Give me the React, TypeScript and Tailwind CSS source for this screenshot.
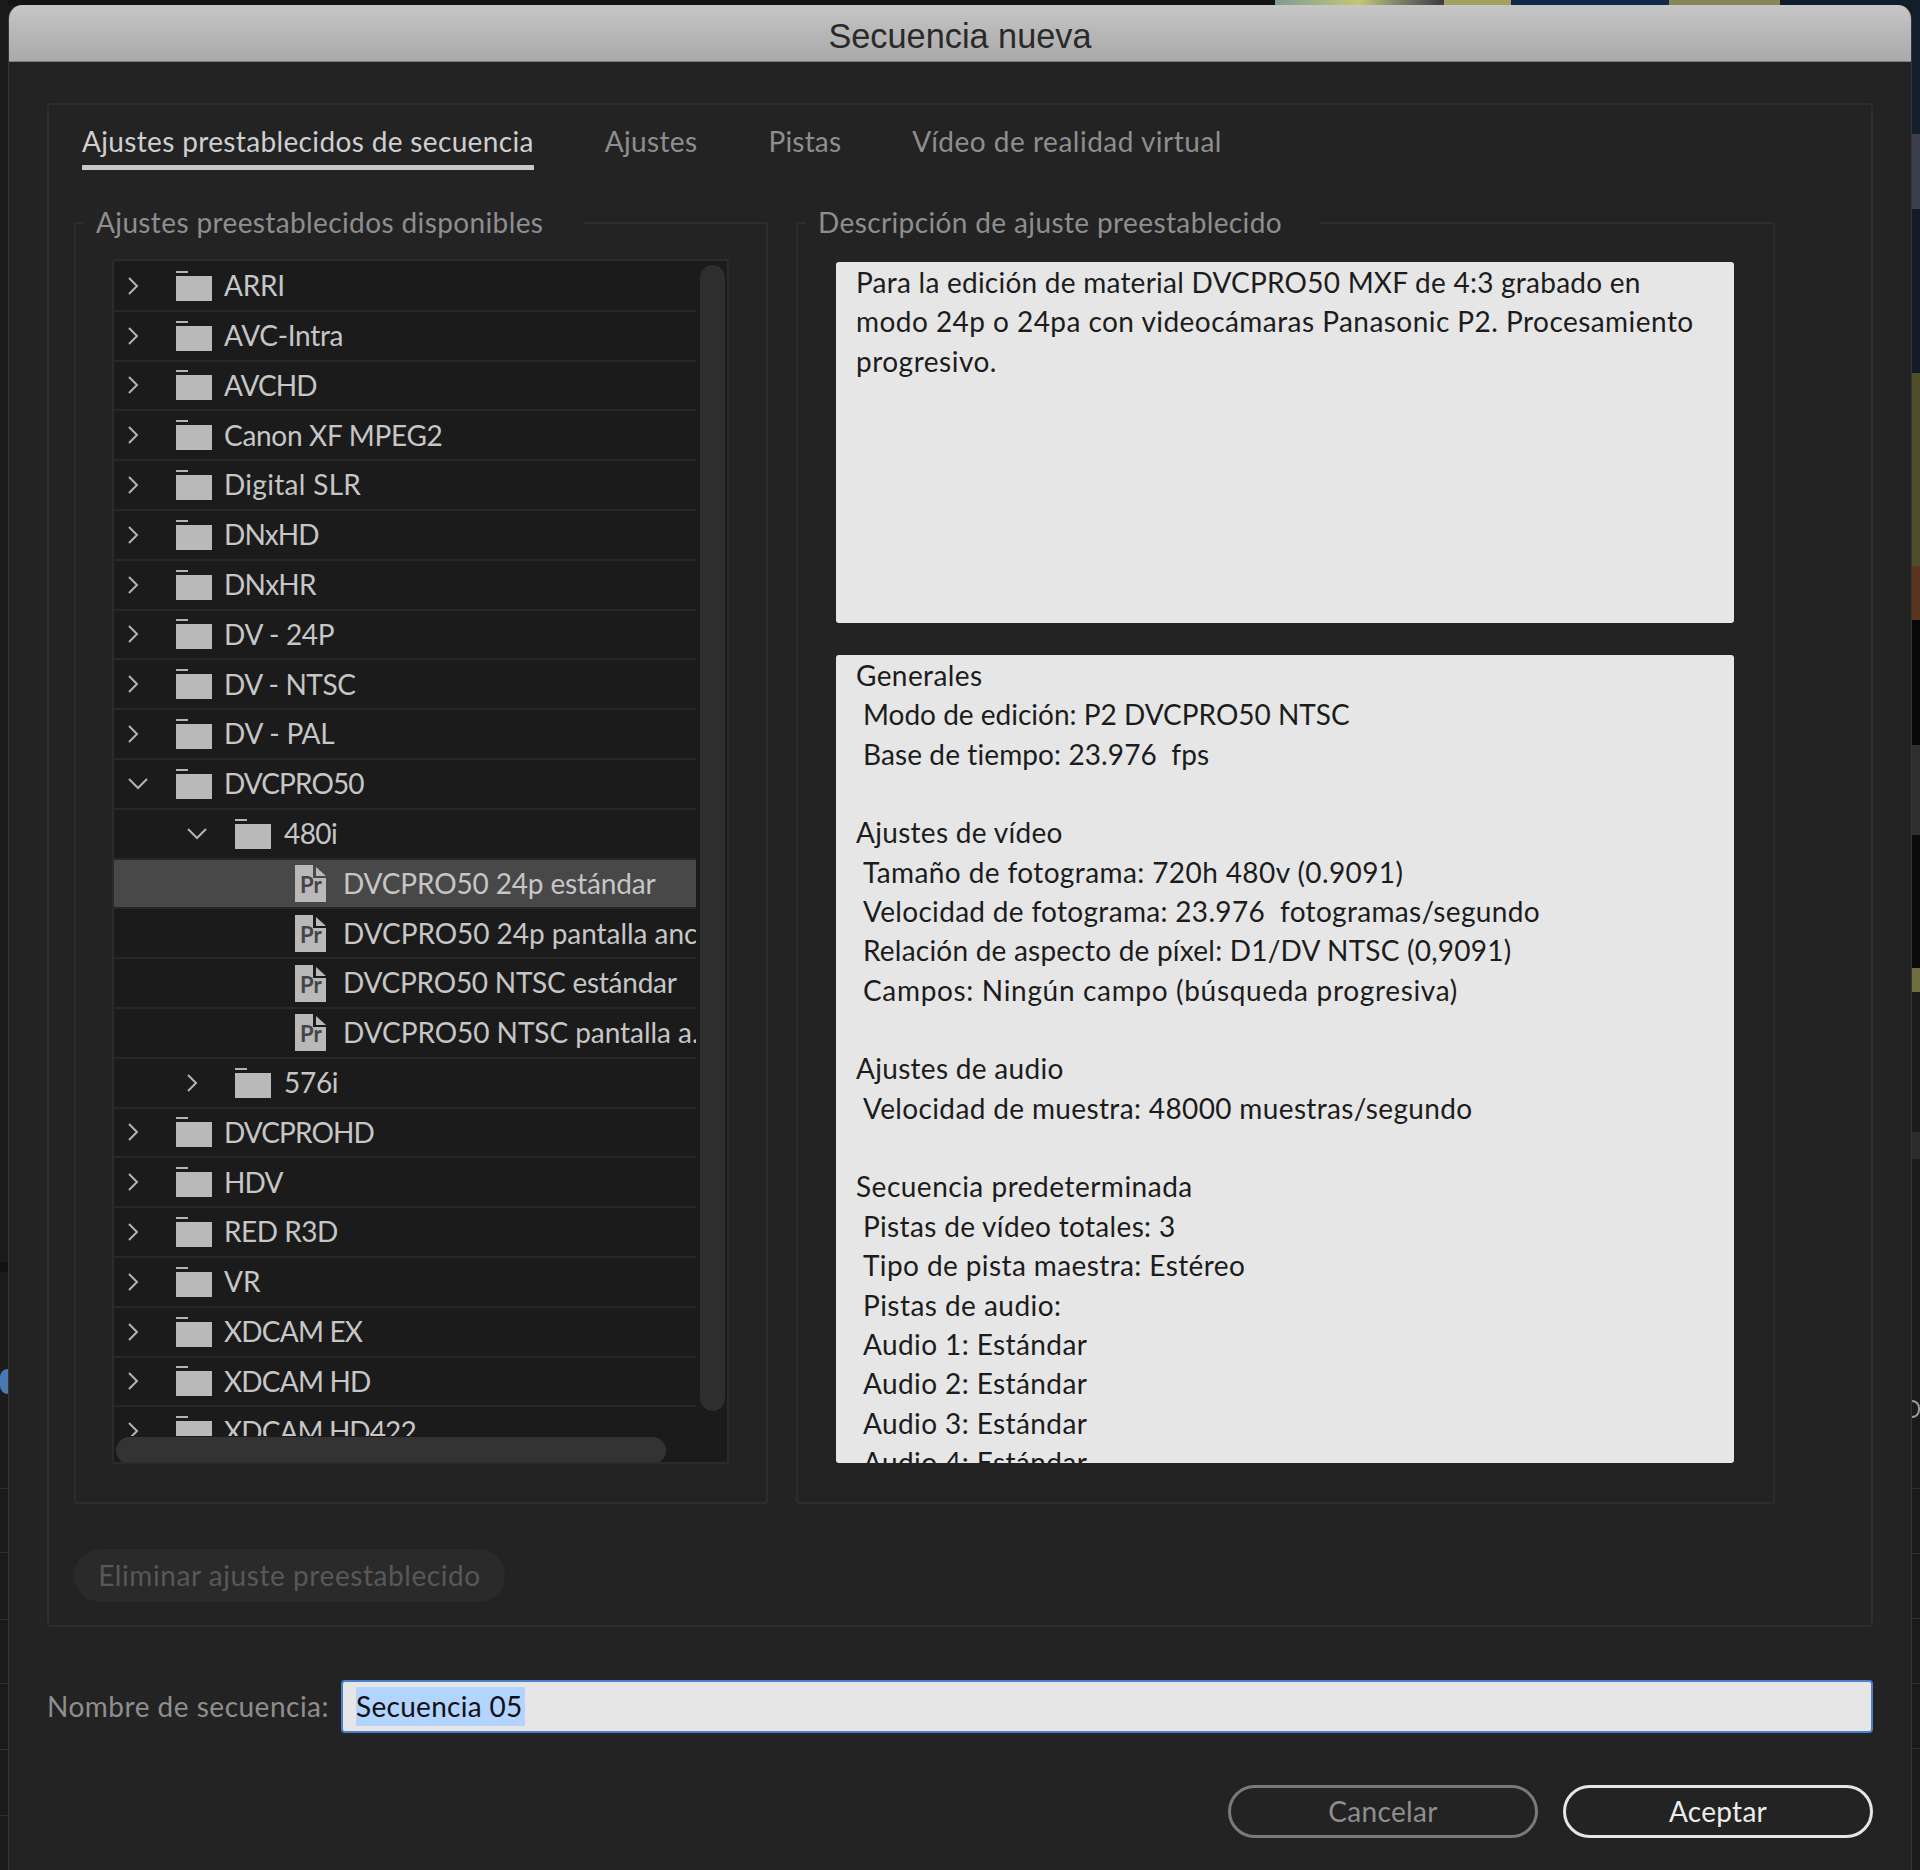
import type { ReactNode } from 'react';

type TreeRow = {
  label: string;
  depth: number;
  kind: 'closed' | 'open' | 'preset';
  fit?: string;
  selected?: boolean;
};

const treeRows: TreeRow[] = [
  { label: 'ARRI', depth: 0, kind: 'closed', fit: 'tracking-[-0.3px]' },
  { label: 'AVC-Intra', depth: 0, kind: 'closed', fit: 'tracking-[-0.3px]' },
  { label: 'AVCHD', depth: 0, kind: 'closed', fit: 'tracking-[-0.9px]' },
  { label: 'Canon XF MPEG2', depth: 0, kind: 'closed', fit: 'tracking-[-0.3px]' },
  { label: 'Digital SLR', depth: 0, kind: 'closed', fit: 'tracking-[0.3px]' },
  { label: 'DNxHD', depth: 0, kind: 'closed', fit: 'tracking-[-0.9px]' },
  { label: 'DNxHR', depth: 0, kind: 'closed', fit: 'tracking-[-0.7px]' },
  { label: 'DV - 24P', depth: 0, kind: 'closed', fit: 'tracking-[-0.3px]' },
  { label: 'DV - NTSC', depth: 0, kind: 'closed', fit: 'tracking-[-0.4px]' },
  { label: 'DV - PAL', depth: 0, kind: 'closed', fit: 'tracking-[-0.2px]' },
  { label: 'DVCPRO50', depth: 0, kind: 'open', fit: 'tracking-[-0.9px]' },
  { label: '480i', depth: 1, kind: 'open', fit: 'tracking-[-0.6px]' },
  { label: 'DVCPRO50 24p estándar', depth: 2, kind: 'preset', fit: 'tracking-[-0.15px]', selected: true },
  { label: 'DVCPRO50 24p pantalla ancha', depth: 2, kind: 'preset', fit: 'tracking-[-0.05px]' },
  { label: 'DVCPRO50 NTSC estándar', depth: 2, kind: 'preset', fit: 'tracking-[-0.25px]' },
  { label: 'DVCPRO50 NTSC pantalla a...', depth: 2, kind: 'preset', fit: 'tracking-[-0.05px]' },
  { label: '576i', depth: 1, kind: 'closed', fit: 'tracking-[-0.3px]' },
  { label: 'DVCPROHD', depth: 0, kind: 'closed', fit: 'tracking-[-0.9px]' },
  { label: 'HDV', depth: 0, kind: 'closed', fit: 'tracking-[-0.8px]' },
  { label: 'RED R3D', depth: 0, kind: 'closed', fit: 'tracking-[-0.5px]' },
  { label: 'VR', depth: 0, kind: 'closed' },
  { label: 'XDCAM EX', depth: 0, kind: 'closed', fit: 'tracking-[-0.8px]' },
  { label: 'XDCAM HD', depth: 0, kind: 'closed', fit: 'tracking-[-0.8px]' },
  { label: 'XDCAM HD422', depth: 0, kind: 'closed', fit: 'tracking-[-0.9px]' },
];

const summaryLines: { text: string; indented?: boolean; fit?: string }[] = [
  { text: 'Generales', fit: 'tracking-[0.4px]' },
  { text: 'Modo de edición: P2 DVCPRO50 NTSC', indented: true },
  { text: 'Base de tiempo: 23.976  fps', indented: true, fit: 'tracking-[0.1px]' },
  { text: '' },
  { text: 'Ajustes de vídeo', fit: 'tracking-[0.3px]' },
  { text: 'Tamaño de fotograma: 720h 480v (0.9091)', indented: true, fit: 'tracking-[0.4px]' },
  { text: 'Velocidad de fotograma: 23.976  fotogramas/segundo', indented: true, fit: 'tracking-[0.32px]' },
  { text: 'Relación de aspecto de píxel: D1/DV NTSC (0,9091)', indented: true, fit: 'tracking-[0.22px]' },
  { text: 'Campos: Ningún campo (búsqueda progresiva)', indented: true, fit: 'tracking-[0.67px]' },
  { text: '' },
  { text: 'Ajustes de audio', fit: 'tracking-[0.3px]' },
  { text: 'Velocidad de muestra: 48000 muestras/segundo', indented: true, fit: 'tracking-[0.36px]' },
  { text: '' },
  { text: 'Secuencia predeterminada', fit: 'tracking-[0.5px]' },
  { text: 'Pistas de vídeo totales: 3', indented: true, fit: 'tracking-[0.33px]' },
  { text: 'Tipo de pista maestra: Estéreo', indented: true, fit: 'tracking-[0.4px]' },
  { text: 'Pistas de audio:', indented: true, fit: 'tracking-[0.45px]' },
  { text: 'Audio 1: Estándar', indented: true, fit: 'tracking-[0.4px]' },
  { text: 'Audio 2: Estándar', indented: true, fit: 'tracking-[0.4px]' },
  { text: 'Audio 3: Estándar', indented: true, fit: 'tracking-[0.4px]' },
  { text: 'Audio 4: Estándar', indented: true, fit: 'tracking-[0.4px]' },
];

function FolderIcon() {
  return (
    <svg width="36" height="30" viewBox="0 0 36 30" className="shrink-0">
      <rect x="0" y="0" width="12" height="2" fill="#b4b4b4" />
      <rect x="0" y="5" width="36" height="25" fill="#b9b9b9" />
    </svg>
  );
}

function PresetIcon() {
  return (
    <svg width="31" height="37" viewBox="0 0 31 37" className="shrink-0">
      <path d="M0 0H18V13H31V37H0Z" fill="#b9b9b9" />
      <path d="M21 2L31 11H21Z" fill="#b9b9b9" />
      <text x="5" y="28" fontSize="22" fontWeight="700" fontFamily="Lato, sans-serif" fill="#454545">
        Pr
      </text>
    </svg>
  );
}

function Chevron({ open }: { open: boolean }) {
  if (open) {
    return (
      <svg width="20" height="12" viewBox="0 0 20 12" fill="none" stroke="#b4b4b4" strokeWidth="2">
        <path d="M1 1L10 10L19 1" />
      </svg>
    );
  }
  return (
    <svg width="11" height="18" viewBox="0 0 11 18" fill="none" stroke="#b4b4b4" strokeWidth="2">
      <path d="M1 1L9 9L1 17" />
    </svg>
  );
}

function Row({ row }: { row: TreeRow }) {
  const indent = row.depth === 0 ? 'pl-[14px]' : row.depth === 1 ? 'pl-[73px]' : 'pl-[133px]';
  const gap = row.kind === 'preset' ? 'ml-[17px]' : row.depth === 1 ? 'ml-[13px]' : 'ml-[12px]';
  return (
    <div
      className={`flex h-[49.8px] shrink-0 items-center whitespace-nowrap border-b-2 border-[#272727] text-[#c6c6c6] ${indent} ${
        row.selected ? 'bg-[#484848]' : ''
      }`}
    >
      <div className="flex w-[48px] shrink-0 items-center">
        {row.kind !== 'preset' && <Chevron open={row.kind === 'open'} />}
      </div>
      {row.kind === 'preset' ? <PresetIcon /> : <FolderIcon />}
      <span className={`${gap} ${row.fit ?? ''}`}>{row.label}</span>
    </div>
  );
}

function Group({
  title,
  width,
  padRight,
  children,
}: {
  title: string;
  width: string;
  padRight: string;
  children: ReactNode;
}) {
  return (
    <fieldset className={`h-[1299px] shrink-0 rounded-[3px] border-2 border-[#2d2d2d] ${width}`}>
      <legend
        className={`ml-[8px] pb-[2px] pl-[12px] text-[28px] leading-[34px] tracking-[0.38px] text-[#8e8e8e] ${padRight}`}
      >
        {title}
      </legend>
      {children}
    </fieldset>
  );
}

export default function App() {
  return (
    <div className="flex h-[1870px] w-[1920px] overflow-hidden bg-[#1a1a1a] font-[Lato,sans-serif] text-[28px] leading-[39.35px]">
      {/* desktop showing behind the dialog, left edge */}
      <div className="flex w-[8px] shrink-0 flex-col bg-[#1b1b1b]">
        <div className="mt-[1262px] h-[10px] bg-[#121212]" />
        <div className="mt-[97px] h-[25px] w-[8px] rounded-l-full bg-[#4a78b0]" />
        <div className="mt-[94px] h-px bg-[#303030]" />
        <div className="mt-[63px] h-px bg-[#303030]" />
        <div className="mt-[66px] h-px bg-[#303030]" />
        <div className="mt-[63px] h-px bg-[#303030]" />
        <div className="mt-[65px] h-px bg-[#303030]" />
        <div className="mt-[65px] h-px bg-[#303030]" />
      </div>

      <div className="flex w-[1904px] shrink-0 flex-col">
        {/* desktop strip above the dialog */}
        <div className="flex h-[5px] shrink-0 bg-[#141414]">
          <div className="w-[1267px]" />
          <div className="w-[169px] bg-gradient-to-r from-[#7f9c93] via-[#c3c774] to-[#3b3b4a]" />
          <div className="w-[67px] bg-[#a3a15c]" />
          <div className="w-[158px] bg-[#12294a]" />
          <div className="w-[111px] bg-[#85875a]" />
          <div className="w-[132px] bg-[#0f1d2c]" />
        </div>

        <div className="flex h-[1865px] flex-col overflow-hidden rounded-t-[14px] border-x border-[#353535] bg-[#232323]">
          <div className="flex h-[57px] shrink-0 items-center justify-center border-b border-[#7c7c7c] bg-gradient-to-b from-[#c6c6c6] to-[#a9a9a9] pt-[7px] font-['Liberation_Sans',sans-serif] text-[34.3px] text-[#2a2a2a]">
            Secuencia nueva
          </div>

          <div className="mx-[38px] mt-[41px] h-[1524px] shrink-0 rounded-[4px] border-2 border-[#2d2d2d]">
            <div className="flex gap-[71px] pl-[33px] pt-[16px] text-[#8e8e8e]">
              <div className="h-[49px] border-b-[5px] border-[#c8c8c8] leading-[40px] tracking-[0.35px] text-[#cfcfcf]">
                Ajustes prestablecidos de secuencia
              </div>
              <div className="leading-[40px] tracking-[0.35px]">Ajustes</div>
              <div className="leading-[40px] tracking-[0.2px]">Pistas</div>
              <div className="leading-[40px] tracking-[0.5px]">Vídeo de realidad virtual</div>
            </div>

            <div className="ml-[25px] mt-[35px] flex gap-[28px]">
              <Group title="Ajustes preestablecidos disponibles" width="w-[694px]" padRight="pr-[40px]">
                <div className="ml-[36px] mt-[18px] h-[1205px] w-[617px] overflow-hidden rounded-[3px] border-2 border-[#2b2b2b] bg-[#1b1b1b]">
                  <div className="flex h-[1175px] overflow-hidden">
                    <div className="flex h-[1175px] w-[582px] shrink-0 flex-col overflow-hidden pt-[1px]">
                      {treeRows.map(row => (
                        <Row key={row.label} row={row} />
                      ))}
                    </div>
                    <div className="ml-[4px] mt-[4px] h-[1146px] w-[25px] rounded-full bg-[#2e2e2e]" />
                  </div>
                  <div className="ml-[2px] mt-[1px] h-[27px] w-[550px] rounded-full bg-[#333333]" />
                </div>
              </Group>

              <Group title="Descripción de ajuste preestablecido" width="w-[979px]" padRight="pr-[38px]">
                <div className="ml-[38px] mt-[21px] flex w-[898px] flex-col gap-[32px] text-[#1c1c1c]">
                  <div className="h-[361px] whitespace-nowrap rounded-[3px] bg-[#e6e6e6] pl-[20px] pt-[1px]">
                    <div className="tracking-[0.24px]">Para la edición de material DVCPRO50 MXF de 4:3 grabado en</div>
                    <div className="tracking-[0.45px]">modo 24p o 24pa con videocámaras Panasonic P2. Procesamiento</div>
                    <div className="tracking-[0.5px]">progresivo.</div>
                  </div>
                  <div className="h-[808px] overflow-hidden rounded-[3px] bg-[#e6e6e6] pl-[20px] pt-[1px]">
                    {summaryLines.map((line, i) => (
                      <div
                        key={i}
                        className={`h-[39.35px] whitespace-pre ${line.indented ? 'pl-[7px]' : ''} ${line.fit ?? ''}`}
                      >
                        {line.text}
                      </div>
                    ))}
                  </div>
                </div>
              </Group>
            </div>

            <div className="ml-[25px] mt-[45px] flex h-[53px] w-[431px] items-center justify-center rounded-full bg-[#2a2a2a] tracking-[0.57px] text-[#585858]">
              Eliminar ajuste preestablecido
            </div>
          </div>

          <div className="mx-[38px] mt-[53px] flex items-center">
            <div className="w-[294px] shrink-0 tracking-[0.5px] text-[#8e8e8e]">Nombre de secuencia:</div>
            <div className="flex h-[53px] flex-1 items-center rounded-[4px] border-2 border-[#4a7fd0] bg-[#e6e6e6] pl-[13px] tracking-[0.3px] text-[#111111]">
              <span className="bg-[#b3d4ff] pr-[2px]">Secuencia 05</span>
            </div>
          </div>

          <div className="mr-[38px] mt-[52px] flex justify-end gap-[25px]">
            <div className="flex h-[53px] w-[310px] items-center justify-center rounded-full border-[3px] border-[#7a7a7a] tracking-[0.3px] text-[#8e8e8e]">
              Cancelar
            </div>
            <div className="flex h-[53px] w-[310px] items-center justify-center rounded-full border-[3px] border-[#e6e6e6] tracking-[0.3px] text-[#ececec]">
              Aceptar
            </div>
          </div>
        </div>
      </div>

      {/* desktop showing behind the dialog, right edge */}
      <div className="flex w-[8px] shrink-0 flex-col bg-[#1b1b1b]">
        <div className="h-[134px] bg-[#12202e]" />
        <div className="h-[75px] bg-[#3a3f49]" />
        <div className="h-[164px] bg-[#111a26]" />
        <div className="h-[193px] bg-[#4f4e2a]" />
        <div className="h-[54px] bg-[#5a3620]" />
        <div className="h-[125px] bg-[#070707]" />
        <div className="h-[90px] bg-[#2e2e2c]" />
        <div className="h-[133px] bg-[#0b0b0b]" />
        <div className="h-[24px] bg-[#6e6e40]" />
        <div className="h-[140px] bg-[#1b1b1b]" />
        <div className="h-[27px] bg-[#2c2c2c]" />
        <div className="h-[241px] bg-[#1b1b1b]" />
        <div className="h-[18px] rounded-r-full border-2 border-l-0 border-[#9a9a9a]" />
        <div className="mt-[70px] h-px bg-[#303030]" />
        <div className="mt-[64px] h-px bg-[#303030]" />
        <div className="mt-[64px] h-px bg-[#303030]" />
        <div className="mt-[64px] h-px bg-[#303030]" />
        <div className="mt-[64px] h-px bg-[#303030]" />
      </div>
    </div>
  );
}
